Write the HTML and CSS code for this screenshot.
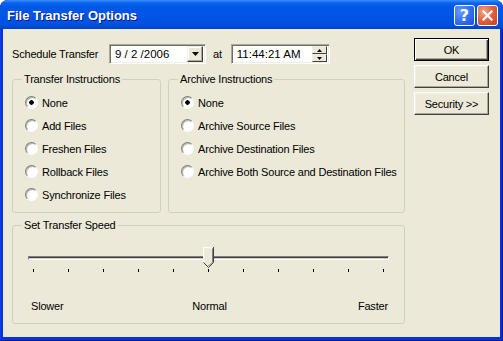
FILE: index.html
```html
<!DOCTYPE html>
<html lang="en">
<head>
<meta charset="UTF-8" />
<meta name="viewport" content="width=device-width, initial-scale=1" />
<title>File Transfer Options</title>
<link rel="stylesheet" href="styles.css">
</head>
<body>
<div class="window">
  <div class="titlebar">
    <span class="title">File Transfer Options</span>
    <div class="caption-btns">
      <button class="cap help">?</button>
      <button class="cap close">
        <svg width="11" height="11" viewBox="0 0 11 11"><path d="M1.5 1.5 L9.5 9.5 M9.5 1.5 L1.5 9.5" stroke="#fff" stroke-width="2.2" stroke-linecap="square"/></svg>
      </button>
    </div>
  </div>

  <div class="client">
    <div class="main">
      <!-- date / time row -->
      <div class="schedule">
        <span class="sched-label">Schedule Transfer</span>
        <div class="field date">
          <span class="val">9 / 2 /2006</span>
          <span class="drop"><svg width="7" height="4" viewBox="0 0 7 4"><path d="M0 0 H7 L3.5 4 Z" fill="#000"/></svg></span>
        </div>
        <span class="at">at</span>
        <div class="field time">
          <span class="val">11:44:21 AM</span>
          <span class="spin">
            <span class="spin-btn"><svg width="5" height="3" viewBox="0 0 5 3"><path d="M2.5 0 L5 3 H0 Z" fill="#000"/></svg></span>
            <span class="spin-btn"><svg width="5" height="3" viewBox="0 0 5 3"><path d="M0 0 H5 L2.5 3 Z" fill="#000"/></svg></span>
          </span>
        </div>
      </div>

      <div class="groups">
        <fieldset class="group transfer">
          <legend>Transfer Instructions</legend>
          <div class="options">
            <label class="opt"><input type="radio" name="transfer" checked><span>None</span></label>
            <label class="opt"><input type="radio" name="transfer"><span>Add Files</span></label>
            <label class="opt"><input type="radio" name="transfer"><span>Freshen Files</span></label>
            <label class="opt"><input type="radio" name="transfer"><span>Rollback Files</span></label>
            <label class="opt"><input type="radio" name="transfer"><span>Synchronize Files</span></label>
          </div>
        </fieldset>
        <fieldset class="group archive">
          <legend>Archive Instructions</legend>
          <div class="options">
            <label class="opt"><input type="radio" name="archive" checked><span>None</span></label>
            <label class="opt"><input type="radio" name="archive"><span>Archive Source Files</span></label>
            <label class="opt"><input type="radio" name="archive"><span>Archive Destination Files</span></label>
            <label class="opt"><input type="radio" name="archive"><span>Archive Both Source and Destination Files</span></label>
          </div>
        </fieldset>
      </div>

      <fieldset class="group speed">
        <legend>Set Transfer Speed</legend>
        <div class="slider">
          <div class="track"></div>
          <span class="thumb">
            <svg width="11" height="21" viewBox="0 0 11 21">
              <path d="M0.5 20 V0.5 H10.5 V15.5 L5.5 20.5 L0.5 15.5" fill="#ece9d8" stroke="none"/>
              <path d="M0.5 15.5 V0.5 H9.5" fill="none" stroke="#fff"/>
              <path d="M1.5 15 V1.5 H9" fill="none" stroke="#f1efe2"/>
              <path d="M10.5 0 V15.5 L5.5 20.5 L0.5 15.5" fill="none" stroke="#404040"/>
              <path d="M9.5 1.5 V15 L5.5 19" fill="none" stroke="#808080"/>
            </svg>
          </span>
          <div class="ticks">
            <i></i><i></i><i></i><i></i><i></i><i></i><i></i><i></i><i></i><i></i><i></i>
          </div>
          <div class="scale">
            <span class="slow">Slower</span>
            <span class="normal">Normal</span>
            <span class="fast">Faster</span>
          </div>
        </div>
      </fieldset>
    </div>

    <div class="side">
      <button class="btn default">OK</button>
      <button class="btn">Cancel</button>
      <button class="btn">Security &gt;&gt;</button>
    </div>
  </div>
</div>
</body>
</html>
```

FILE: styles.css
```css
body { margin: 0; background: #fff; font-family: "Liberation Sans", Arial, sans-serif; font-size: 11px; letter-spacing: -0.18px; color: #000; }
.window { width: 503px; height: 341px; display: flex; flex-direction: column; background: #0831d9; border-radius: 8px 8px 0 0; box-shadow: inset -1px -1px #001ea0, inset 1px 0 #0841e0; overflow: hidden; box-sizing: border-box; }

/* title bar */
.titlebar { height: 29px; flex: none; display: flex; align-items: center; justify-content: space-between; padding: 0 5px 0 7px; box-sizing: border-box; border-radius: 8px 8px 0 0;
  background: linear-gradient(to bottom, #3d8ff8 0, #0a63ee 3px, #0058e8 7px, #0054e3 18px, #0051df 25px, #0042c4 29px); }
.title { color: #fff; font-weight: 700; font-size: 13px; letter-spacing: 0; text-shadow: 1px 1px #0a1883; padding-top: 1px; }
.caption-btns { display: flex; gap: 2px; padding-top: 1px; }
.cap { width: 21px; height: 21px; padding: 0; border: 1px solid #fff; border-radius: 3px; display: flex; align-items: center; justify-content: center; color: #fff; font-family: "DejaVu Sans", sans-serif; font-weight: 700; font-size: 16px; }
.help { background: radial-gradient(circle at 30% 30%, #6d9cf7 0, #2f6ef0 55%, #1c4fd6 100%); }
.close { background: radial-gradient(circle at 30% 30%, #f0a48a 0, #e35f3c 50%, #c4421f 100%); }

/* client area */
.client { flex: 1; display: flex; background: #ece9d8; margin: 0 3px 4px 3px; padding-left: 9px; }
.main { width: 393px; padding-top: 15px; }
.side { display: flex; flex-direction: column; gap: 4px; padding: 9px 0 0 9px; }

.schedule { display: flex; align-items: center; height: 20px; }
.sched-label { width: 97px; }
.at { margin: 0 9px 0 7px; }
.field { height: 20px; box-sizing: border-box; display: flex; align-items: center; justify-content: space-between; background: #fff;
  border: 1px solid; border-color: #aca899 #fff #fff #aca899; box-shadow: inset 1px 1px #716f64, inset -1px -1px #f1efe2; }
.field .val { padding-left: 5px; font-size: 11.5px; letter-spacing: 0; }
.date { width: 97px; }
.time { width: 99px; }
.drop { width: 16px; height: 16px; margin-right: 2px; box-sizing: border-box; display: flex; align-items: center; justify-content: center; background: #ece9d8;
  border: 1px solid; border-color: #f1efe2 #404040 #404040 #f1efe2; box-shadow: inset -1px -1px #aca899, inset 1px 1px #fff; }
.spin { display: flex; flex-direction: column; margin-right: 2px; }
.spin-btn { width: 15px; height: 8px; box-sizing: border-box; display: flex; align-items: center; justify-content: center; background: #ece9d8;
  border: 1px solid; border-color: #f1efe2 #404040 #404040 #f1efe2; }

/* group boxes */
.groups { display: flex; gap: 7px; margin-top: 9px; }
.group { margin: 0; padding: 0; min-width: 0; box-sizing: border-box; border: 1px solid #d0d0bf; border-radius: 3px; }
.group legend { margin-left: 9px; padding: 0 2px; line-height: 13px; color: #000; }
.transfer { width: 149px; height: 140px; }
.archive { width: 237px; height: 140px; }
.options { padding: 5px 0 0 12px; }
.opt { display: flex; align-items: center; height: 23px; gap: 4px; white-space: nowrap; }
.opt input { appearance: none; -webkit-appearance: none; margin: 0; width: 13px; height: 13px; border-radius: 50%; box-sizing: border-box; flex: none;
  border: 1px solid; border-color: #808080 #fff #fff #808080; background: radial-gradient(circle at 60% 60%, #fff 0, #fff 45%, #e2e0d6 100%); box-shadow: inset 1px 1px #b8b6aa; }
.opt input:checked { background: radial-gradient(circle, #000 0, #000 2px, transparent 2.5px), radial-gradient(circle at 60% 60%, #fff 0, #fff 45%, #e2e0d6 100%); }

/* slider */
.speed { width: 393px; height: 105px; margin-top: 6px; }
.slider { position: relative; margin: 15px 0 0 15px; width: 361px; padding-top: 9px; }
.track { height: 4px; box-sizing: border-box; border: 1px solid; border-color: #808080 #fff #fff #808080; background: #d4d0c8; box-shadow: inset 0 1px #404040; }
.thumb { position: absolute; left: 175px; top: 0; width: 11px; height: 21px; display: block; }
.thumb svg { display: block; }
.ticks { display: flex; justify-content: space-between; width: 351px; margin: 9px 0 0 5px; }
.ticks i { display: block; width: 1px; height: 3px; background: #000; }
.scale { display: grid; grid-template-columns: 1fr auto 1fr; margin: 28px 0 0 3px; width: 357px; line-height: 13px; }
.slow { justify-self: start; }
.normal { justify-self: center; }
.fast { justify-self: end; }

/* push buttons */
.btn { width: 75px; height: 23px; padding: 0; font-family: inherit; font-size: 11px; letter-spacing: inherit; color: #000; background: #ece9d8; box-sizing: border-box;
  border: 1px solid; border-color: #fff #404040 #404040 #fff; box-shadow: inset -1px -1px #aca899, inset 1px 1px #f1efe2; }
.btn.default { border-color: #000; box-shadow: inset 1px 1px #fff, inset -1px -1px #404040, inset -2px -2px #aca899; }
```
